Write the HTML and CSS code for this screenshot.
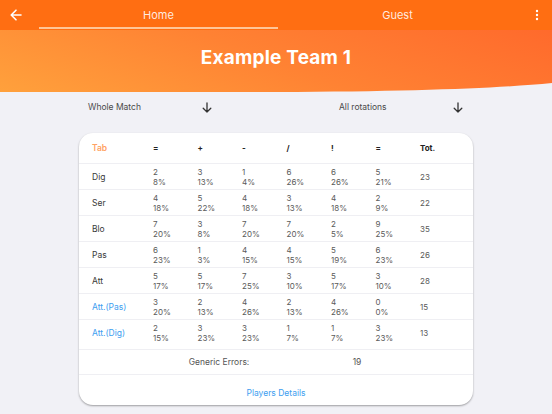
FILE: index.html
```html
<!DOCTYPE html>
<html>
<head>
<meta charset="utf-8">
<link rel="stylesheet" href="styles.css">
</head>
<body>
<div class="topbar">
  <div class="back">
    <svg width="12" height="12" viewBox="0 0 12 12"><path d="M11 6H1.5M6 1.2L1.2 6L6 10.8" fill="none" stroke="#fff" stroke-width="1.6" stroke-linecap="round" stroke-linejoin="round"/></svg>
  </div>
  <div class="tab active">Home</div>
  <div class="tab">Guest</div>
  <div class="more">
    <svg width="4" height="12" viewBox="0 0 4 12"><circle cx="2" cy="2" r="1.2" fill="#fff"/><circle cx="2" cy="6" r="1.2" fill="#fff"/><circle cx="2" cy="10" r="1.2" fill="#fff"/></svg>
  </div>
</div>
<div class="hero">
  <h1 class="title">Example Team 1</h1>
</div>
<div class="filters">
  <div class="dropdown"><span>Whole Match</span>
    <svg width="10" height="11" viewBox="0 0 10 11"><path d="M5 1V10M1.2 6.2L5 10L8.8 6.2" fill="none" stroke="#333" stroke-width="1.3" stroke-linecap="round" stroke-linejoin="round"/></svg>
  </div>
  <div class="dropdown"><span>All rotations</span>
    <svg width="10" height="11" viewBox="0 0 10 11"><path d="M5 1V10M1.2 6.2L5 10L8.8 6.2" fill="none" stroke="#333" stroke-width="1.3" stroke-linecap="round" stroke-linejoin="round"/></svg>
  </div>
</div>
<div class="card">
  <div class="row head">
    <div class="label tabname">Tab</div>
    <div>=</div><div>+</div><div>-</div><div>/</div><div>!</div><div>=</div><div>Tot.</div>
  </div>
  <div class="row">
    <div class="label">Dig</div>
    <div class="cell">2<br>8%</div><div class="cell">3<br>13%</div><div class="cell">1<br>4%</div><div class="cell">6<br>26%</div><div class="cell">6<br>26%</div><div class="cell">5<br>21%</div><div class="cell">23</div>
  </div>
  <div class="row">
    <div class="label">Ser</div>
    <div class="cell">4<br>18%</div><div class="cell">5<br>22%</div><div class="cell">4<br>18%</div><div class="cell">3<br>13%</div><div class="cell">4<br>18%</div><div class="cell">2<br>9%</div><div class="cell">22</div>
  </div>
  <div class="row">
    <div class="label">Blo</div>
    <div class="cell">7<br>20%</div><div class="cell">3<br>8%</div><div class="cell">7<br>20%</div><div class="cell">7<br>20%</div><div class="cell">2<br>5%</div><div class="cell">9<br>25%</div><div class="cell">35</div>
  </div>
  <div class="row">
    <div class="label">Pas</div>
    <div class="cell">6<br>23%</div><div class="cell">1<br>3%</div><div class="cell">4<br>15%</div><div class="cell">4<br>15%</div><div class="cell">5<br>19%</div><div class="cell">6<br>23%</div><div class="cell">26</div>
  </div>
  <div class="row">
    <div class="label">Att</div>
    <div class="cell">5<br>17%</div><div class="cell">5<br>17%</div><div class="cell">7<br>25%</div><div class="cell">3<br>10%</div><div class="cell">5<br>17%</div><div class="cell">3<br>10%</div><div class="cell">28</div>
  </div>
  <div class="row">
    <div class="label link">Att.(Pas)</div>
    <div class="cell">3<br>20%</div><div class="cell">2<br>13%</div><div class="cell">4<br>26%</div><div class="cell">2<br>13%</div><div class="cell">4<br>26%</div><div class="cell">0<br>0%</div><div class="cell">15</div>
  </div>
  <div class="row last">
    <div class="label link">Att.(Dig)</div>
    <div class="cell">2<br>15%</div><div class="cell">3<br>23%</div><div class="cell">3<br>23%</div><div class="cell">1<br>7%</div><div class="cell">1<br>7%</div><div class="cell">3<br>23%</div><div class="cell">13</div>
  </div>
  <div class="errors">
    <div class="err-label">Generic Errors:</div>
    <div class="err-value">19</div>
  </div>
  <div class="details">Players Details</div>
</div>
</body>
</html>
```

FILE: styles.css
```css
* { box-sizing: border-box; }
html, body { margin: 0; padding: 0; }
body {
  width: 552px;
  height: 414px;
  overflow: hidden;
  background: #f1f1f6;
  font-family: Inter, "Open Sans", sans-serif;
  color: #333;
}
.topbar {
  height: 30px;
  background: #ff6e12;
  display: flex;
  align-items: stretch;
}
.back {
  width: 39px;
  display: flex;
  align-items: center;
  justify-content: center;
  padding-bottom: 1px;
  padding-right: 8px;
}
.tab {
  width: 239px;
  display: flex;
  align-items: center;
  justify-content: center;
  color: rgba(255,255,255,0.88);
  font-size: 11px;
  padding-top: 2px;
  border-bottom: 3px solid transparent;
}
.tab.active {
  border-bottom: 2px solid #ffc597;
  margin-bottom: 1px;
}
.more {
  flex: 1;
  display: flex;
  align-items: center;
  justify-content: flex-end;
  padding-right: 13px;
  padding-bottom: 1px;
}
.hero {
  height: 63px;
  background: linear-gradient(200deg, #ff6a2c 0%, #ff8233 50%, #ffa13c 100%);
  clip-path: path('M0 0 H552 V53 C 500 58 420 61.5 276 62 L0 62 Z');
  display: flex;
  align-items: center;
  justify-content: center;
  padding-bottom: 9px;
}
.title {
  margin: 0;
  color: #fff;
  font-size: 19px;
  font-weight: 700;
  letter-spacing: 0.2px;
}
.filters {
  display: flex;
  gap: 127px;
  padding-left: 88px;
  margin-top: 4px;
  height: 20px;
}
.dropdown {
  width: 124px;
  display: flex;
  align-items: center;
  justify-content: space-between;
  font-size: 8.5px;
  color: #4a4a4a;
}
.card {
  margin: 16px 0 0 79px;
  width: 394px;
  height: 272px;
  background: #fff;
  border-radius: 14px;
  box-shadow: 0 1px 2px rgba(0,0,0,0.35);
}
.row {
  display: grid;
  grid-template-columns: 61px repeat(7, 44.5px);
  align-items: center;
  padding-left: 13px;
  height: 26px;
  border-top: 1px solid #efeff3;
}
.row.head {
  height: 30px;
  border-top: none;
  font-weight: 700;
  font-size: 8px;
  color: #222;
}
.row.last { height: 30px; padding-bottom: 4px; }
.label { font-size: 8.5px; color: #3a3a3a; }
.tabname { color: #ffa263; font-weight: 600; }
.link { color: #3d9ef0; }
.cell {
  font-size: 8px;
  line-height: 10px;
  color: #5a5a5a;
}
.errors {
  height: 26px;
  border-top: 1px solid #efeff3;
  border-bottom: 1px solid #efeff3;
  display: flex;
  align-items: center;
  font-size: 8.5px;
  color: #555;
}
.err-label {
  width: 140px;
  margin-left: 70px;
  text-align: center;
}
.err-value {
  width: 40px;
  margin-left: 48px;
  text-align: center;
}
.details {
  height: 30px;
  display: flex;
  align-items: center;
  justify-content: center;
  padding-top: 6px;
  font-size: 8.5px;
  color: #3d9ef0;
}
```
